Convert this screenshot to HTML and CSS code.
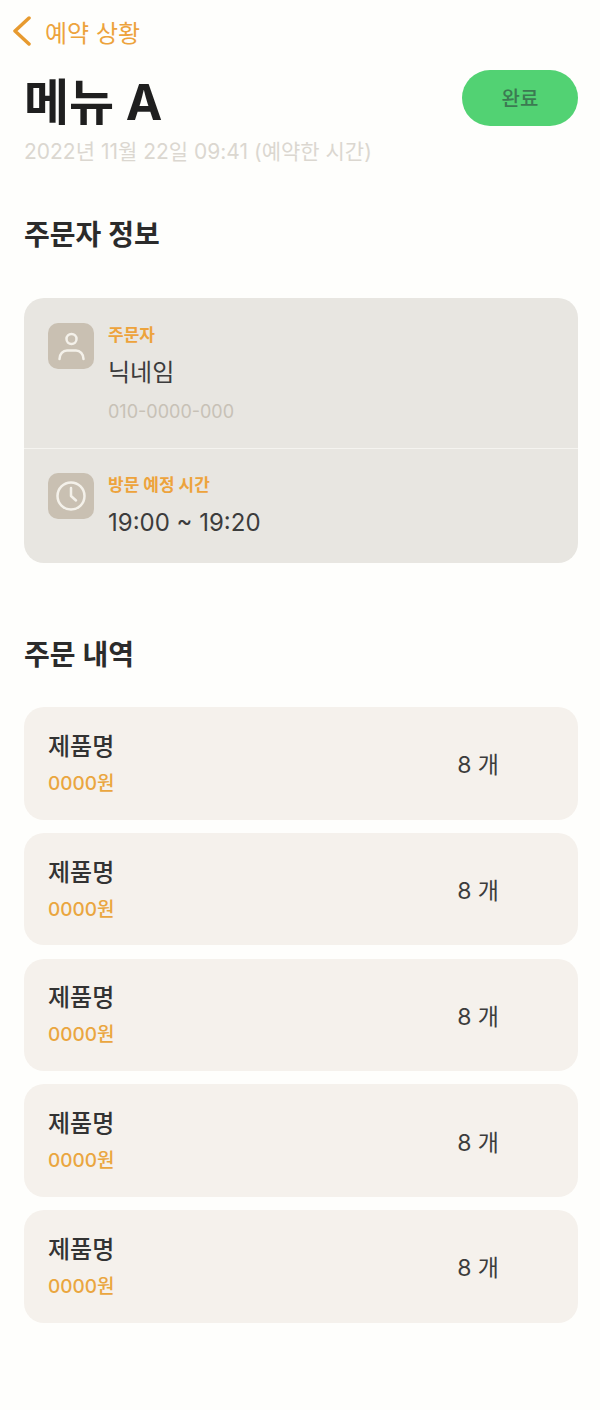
FILE: index.html
```html
<!DOCTYPE html>
<html lang="ko">
<head>
  <meta charset="UTF-8" />
  <meta name="viewport" content="width=device-width, initial-scale=1.0"/>
  <title>예약 상황</title>
  <link rel="stylesheet" href="styles.css">
</head>
<body>
  <a class="back">
    <svg class="back-icon" viewBox="0 0 20 30" width="20" height="30"><path d="M17 2 L3 15 L17 28" /></svg>
    <span>예약 상황</span>
  </a>

  <div class="title-row">
    <h1>메뉴 A</h1>
    <button class="status">완료</button>
  </div>
  <p class="date">2022년 11월 22일 09:41 (예약한 시간)</p>

  <h2 class="info-title">주문자 정보</h2>

  <div class="info-card">
    <div class="info-row first">
      <div class="info-icon">
        <svg viewBox="0 0 46 46" width="46" height="46"><circle cx="23.5" cy="16" r="5" /><path d="M11.5 36 C11.5 31 15 27.5 19 27.5 H28 C32 27.5 35.5 31 35.5 36" /></svg>
      </div>
      <div>
        <div class="label">주문자</div>
        <div class="value">닉네임</div>
        <div class="phone">010-0000-000</div>
      </div>
    </div>
    <div class="info-row">
      <div class="info-icon">
        <svg viewBox="0 0 46 46" width="46" height="46"><circle cx="23" cy="23" r="13.5" /><path d="M23 15 V23 L28 27.5" /></svg>
      </div>
      <div>
        <div class="label">방문 예정 시간</div>
        <div class="value">19:00 ~ 19:20</div>
      </div>
    </div>
  </div>

  <h2 class="order-title">주문 내역</h2>

  <div class="order-list">
    <div class="order"><div><div class="name">제품명</div><div class="price">0000원</div></div><div class="qty">8 개</div></div>
    <div class="order"><div><div class="name">제품명</div><div class="price">0000원</div></div><div class="qty">8 개</div></div>
    <div class="order"><div><div class="name">제품명</div><div class="price">0000원</div></div><div class="qty">8 개</div></div>
    <div class="order"><div><div class="name">제품명</div><div class="price">0000원</div></div><div class="qty">8 개</div></div>
    <div class="order"><div><div class="name">제품명</div><div class="price">0000원</div></div><div class="qty">8 개</div></div>
  </div>
</body>
</html>
```

FILE: styles.css
```css
body {
  font-family: Inter, "Noto Sans CJK KR", sans-serif;
  background: #fefefc;
  color: #2b2b2b;
  margin: 0;
  padding: 16px 22px 0 24px;
  height: 1394px;
  overflow: hidden;
}
.back {
  display: flex;
  align-items: center;
  gap: 13px;
  margin-left: -12px;
  height: 30px;
  color: #eda33c;
  font-size: 24px;
}
.back-icon path {
  fill: none;
  stroke: #e79a2f;
  stroke-width: 3.5;
  stroke-linecap: round;
  stroke-linejoin: round;
}
.title-row {
  display: flex;
  justify-content: space-between;
  align-items: center;
  height: 56px;
  margin-top: 24px;
}
h1 {
  margin: 0;
  font-size: 49px;
  font-weight: 700;
  color: #1f1f1f;
}
.status {
  width: 116px;
  height: 56px;
  padding: 0 0 2px;
  border: none;
  border-radius: 28px;
  background: #52d273;
  color: #3c7a52;
  font-family: inherit;
  font-size: 20px;
  font-weight: 500;
}
.date {
  margin: 11px 0 0;
  font-size: 21px;
  line-height: 30px;
  color: #dbd7d0;
}
h2 {
  margin: 0;
  font-size: 28px;
  line-height: 40px;
  font-weight: 600;
  color: #2b2b2b;
}
.info-title {
  margin-top: 48px;
}
.info-card {
  margin-top: 43px;
  background: #e8e6e1;
  border-radius: 20px;
  height: 265px;
}
.info-row {
  display: flex;
  gap: 14px;
  padding: 24px 24px 0;
}
.info-row.first {
  height: 151px;
  padding-top: 25px;
  box-sizing: border-box;
  border-bottom: 1px solid #f5f4f0;
}
.info-icon {
  width: 46px;
  height: 46px;
  border-radius: 10px;
  background: #c9c0b2;
}
.info-icon svg {
  display: block;
  fill: none;
  stroke: #f4f1ea;
  stroke-width: 2.5;
  stroke-linecap: round;
  stroke-linejoin: round;
}
.label {
  font-size: 17px;
  line-height: 24px;
  font-weight: 700;
  color: #eda33c;
}
.value {
  margin-top: 8px;
  font-size: 24px;
  line-height: 36px;
  color: #3c3c3c;
}
.phone {
  margin-top: 7px;
  font-size: 18px;
  line-height: 28px;
  color: #c7c1b6;
}
.order-title {
  margin-top: 72px;
}
.order-list {
  display: flex;
  flex-direction: column;
  gap: 13.25px;
  margin-top: 32px;
}
.order {
  display: flex;
  justify-content: space-between;
  align-items: center;
  height: 112.5px;
  padding: 0 79px 0 24px;
  background: #f5f1ec;
  border-radius: 20px;
}
.name {
  font-size: 24px;
  line-height: 34px;
  font-weight: 500;
  color: #333;
}
.price {
  margin-top: 7px;
  font-size: 19px;
  line-height: 26px;
  font-weight: 500;
  color: #eaa63f;
}
.qty {
  font-size: 23px;
  color: #3c3c3c;
}
```
